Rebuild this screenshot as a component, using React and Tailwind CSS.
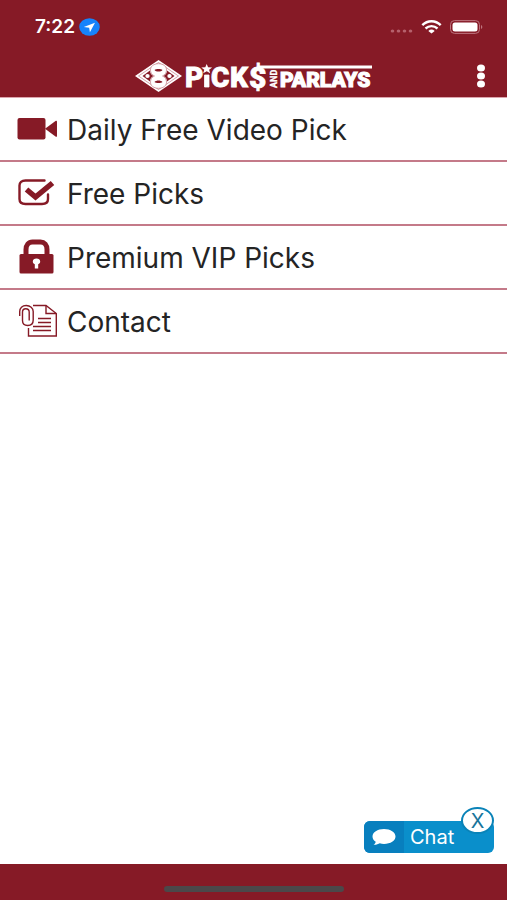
import React from "react";

function StatusBar() {
  return (
    <div className="flex h-[54px] items-center justify-between pl-[35px] pr-6">
      <div className="flex items-center gap-1">
        <span className="text-[19px] font-semibold leading-6">7:22</span>
        <svg width="21" height="18" viewBox="0 0 21 18" aria-hidden="true">
          <ellipse cx="10.5" cy="9" rx="10.3" ry="8.7" fill="#1683fb" />
          <path d="M16 4.8 4.8 9.1l5.4.6.7 4.6z" fill="#fff" />
        </svg>
      </div>
      <div className="flex items-center gap-2">
        <svg width="23" height="12" viewBox="0 0 23 12" fill="#b5616c" aria-hidden="true">
          <ellipse cx="2.5" cy="10" rx="1.800" ry="1.500" />
          <ellipse cx="8.5" cy="10" rx="1.800" ry="1.500" />
          <ellipse cx="14.5" cy="10" rx="1.800" ry="1.500" />
          <ellipse cx="20.5" cy="10" rx="1.800" ry="1.500" />
        </svg>
        <svg width="21" height="14" viewBox="0 0 20 14" fill="none" stroke="#fff" strokeWidth="2.4" aria-hidden="true">
          <path d="M.8 5.2C6-.1 14-.1 19.2 5.2" />
          <path d="M4 8.500c3.500-3.200 8.500-3.200 12 0" />
          <path d="M6.800 11c2-1.900 4.400-1.900 6.400 0L10 13.600z" fill="#fff" stroke="none" />
        </svg>
        <svg width="33" height="14" viewBox="0 0 33 14" aria-hidden="true">
          <rect x="0.500" y="0.600" width="29" height="12.800" rx="4" fill="none" stroke="#bd747e" />
          <rect x="2.500" y="2.400" width="25" height="9.200" rx="2.500" fill="#fff" />
          <path d="M31 5c1.800.6 1.800 3.400 0 4z" fill="#bd747e" />
        </svg>
      </div>
    </div>
  );
}

function Logo() {
  return (
    <svg width="240" height="36" viewBox="0 0 240 36" overflow="visible" role="img" aria-label="Picks and Parlays">
      <path d="M1 18 24.500 2 48 18 24.500 34z" fill="#fff" />
      <path d="M4.500 18 24.500 4.500 44.500 18 24.500 31.500z" fill="none" stroke="#b5616c" strokeWidth="0.600" />
      <path d="M8.500 18 16 12.500c0 2.500 1.200 4.300 3.500 5.500-2.300 1.200-3.500 3-3.500 5.500zM40.500 18 33 12.500c0 2.500-1.200 4.300-3.500 5.500 2.300 1.200 3.500 3 3.500 5.500z" fill="#861a26" />
      <path d="M20.500 18c-2.700-1.300-4-3.200-4-6 0-3.600 3-6.300 8-6.300s8 2.700 8 6.300c0 2.800-1.300 4.700-4 6 2.700 1.300 4 3.200 4 6 0 3.600-3 6.300-8 6.300s-8-2.700-8-6.300c0-2.800 1.300-4.700 4-6z" fill="#fff" stroke="#b5616c" strokeWidth="0.600" />
      <path d="M20.500 12c1.500-1.300 6.500-1.300 8 0-1.500 2-6.500 2-8 0zM20.500 24c1.500 1.300 6.500 1.300 8 0-1.500-2-6.500-2-8 0z" fill="#861a26" />
      <ellipse cx="13.500" cy="18" rx="2.200" ry="1.900" fill="#fff" />
      <ellipse cx="35.500" cy="18" rx="2.200" ry="1.900" fill="#fff" />
      <g fill="#fff" stroke="#fff" fontFamily="Roboto, 'Liberation Sans', sans-serif" fontWeight="900">
        <text x="51" y="29" fontSize="28" strokeWidth="0.800">P</text>
        <path d="M70.500 17h4.500v12h-4.500z" strokeWidth="0.800" />
        <path d="m72.700 6 1.400 3.300 4 .2-3 2.300 1.100 3.500-3.500-2-3.500 2 1.100-3.500-3-2.300 4-.2z" stroke="none" />
        <text x="77" y="29" fontSize="28" strokeWidth="0.800">C</text>
        <text x="96" y="29" fontSize="28" strokeWidth="0.800">K</text>
        <text x="115" y="30" fontSize="30" strokeWidth="0.800">$</text>
        <text x="146" y="29" fontSize="21" strokeWidth="1.100">PARLAYS</text>
      </g>
      <path d="M125 7.500h113v3H125z" fill="#fff" />
      <text transform="translate(143 30) rotate(-90)" fill="#fff" stroke="#fff" strokeWidth="0.300" fontFamily="Roboto, 'Liberation Sans', sans-serif" fontWeight="700" fontSize="9">AND</text>
    </svg>
  );
}

function VideoIcon() {
  return (
    <svg width="40" height="36" viewBox="0 0 40 36" fill="#861a26" aria-hidden="true">
      <rect x="0.500" y="7" width="28" height="21.500" rx="2" />
      <path d="M28 17.800 38.500 10c1-.7 1.500-.3 1.500.8v14c0 1.100-.5 1.500-1.500.8z" />
    </svg>
  );
}

function CheckIcon() {
  return (
    <svg width="40" height="36" viewBox="0 0 40 36" fill="none" stroke="#861a26" aria-hidden="true">
      <path d="M27.500 5.500H8.500c-4 0-6 2-6 5V24c0 3 2 5 6 5H25c4 0 6-2 6-5v-4.500" strokeWidth="2.400" strokeLinecap="round" />
      <path d="m9.500 14.500 9 7.500L35.500 8" strokeWidth="5.500" />
    </svg>
  );
}

function LockIcon() {
  return (
    <svg width="40" height="36" viewBox="0 0 40 36" aria-hidden="true">
      <path d="M9 18V9.500C9 5 11.500 2 15.500 2h8c4 0 6.500 3 6.500 7.500V18" transform="translate(0 1)" fill="none" stroke="#861a26" strokeWidth="5" />
      <rect x="2.500" y="15" width="34" height="19.500" rx="1.500" fill="#861a26" />
      <path d="M19.500 19.500c-2.200 0-3.700 1.300-3.700 3 0 1.300.8 2.200 2 2.700v4.300h3.400v-4.300c1.200-.5 2-1.400 2-2.700 0-1.700-1.500-3-3.700-3z" fill="#fff" />
    </svg>
  );
}

function ContactIcon() {
  return (
    <svg width="40" height="36" viewBox="0 0 40 36" fill="none" stroke="#861a26" strokeWidth="1.400" aria-hidden="true">
      <path d="M16 2.500h13L39.300 10.500v22.500H11.500V25" />
      <path d="M29 2.500v8h10" />
      <path d="M21 15.500h13M21 19.500h13M16 23.500h18M16 27.500h18" />
      <path d="M2.700 13V8.500c0-3.500 2.500-6 6.500-6s7 2.500 7 6V17c0 3.500-2 5.500-5.500 5.500S5.500 20.500 5.500 17.500V9c0-2 1.200-3.200 3.200-3.200s3.500 1.200 3.500 3.200v8.500" />
    </svg>
  );
}

const items = [
  { label: "Daily Free Video Pick", Icon: VideoIcon },
  { label: "Free Picks", Icon: CheckIcon },
  { label: "Premium VIP Picks", Icon: LockIcon },
  { label: "Contact", Icon: ContactIcon },
];

export default function App() {
  return (
    <div className="relative flex min-h-screen flex-col bg-white font-['Inter','Liberation_Sans',sans-serif] text-[#242424]">
      <header className="bg-[#861a26] text-white">
        <StatusBar />
        <div className="grid h-11 grid-cols-[1fr_auto_1fr] items-center border-b border-b-[#dca5ad]">
          <a href="#home" className="col-start-2">
            <Logo />
          </a>
          <button type="button" aria-label="Menu" className="mr-4 flex h-8 w-5 items-center justify-center justify-self-end">
            <svg width="10" height="24" viewBox="0 0 10 24" fill="#fff" aria-hidden="true">
              <ellipse cx="5" cy="4" rx="4" ry="3.500" />
              <ellipse cx="5" cy="12" rx="4" ry="3.500" />
              <ellipse cx="5" cy="20" rx="4" ry="3.500" />
            </svg>
          </button>
        </div>
      </header>

      <main className="flex-1">
        <nav>
          <ul>
            {items.map(({ label, Icon }) => (
              <li key={label} className="border-b-2 border-b-[#c47a89]">
                <a href="#pick" className="flex h-[62px] items-center gap-2.5 pl-[17px]">
                  <Icon />
                  <span className="pt-0.5 text-[28px] leading-8">{label}</span>
                </a>
              </li>
            ))}
          </ul>
        </nav>
      </main>

      <div className="absolute bottom-[47px] right-[13px]">
        <button type="button" className="flex h-8 w-[130px] items-stretch overflow-hidden rounded-md bg-[#0a8fcb] text-white">
          <span className="flex w-10 items-center justify-center bg-[#087fbe]">
            <svg width="24" height="18" viewBox="0 0 24 18" fill="#fff" aria-hidden="true">
              <path d="M12 1C5.500 1 .5 4.200.5 8.500c0 2.200 1.200 4 3.200 5.300-.2 1.300-1 2.300-2.200 3 2.500.2 4.700-.5 6.300-1.500 1.300.4 2.700.6 4.200.6 6.500 0 11.500-3.100 11.500-7.400S18.500 1 12 1z" />
            </svg>
          </span>
          <span className="pl-1.5 text-xl leading-8">Chat</span>
        </button>
        <button type="button" aria-label="Close chat" className="absolute -top-3.5 right-0 flex h-[27px] w-[33px] items-center justify-center rounded-[50%] border-2 border-[#0a83b8] bg-white text-xl leading-6 text-[#17749b]">
          X
        </button>
      </div>

      <footer className="flex h-9 items-end justify-center bg-[#861a26] pb-2">
        <div className="h-1.5 w-[180px] rounded-full bg-[#4b484a]" />
      </footer>
    </div>
  );
}
